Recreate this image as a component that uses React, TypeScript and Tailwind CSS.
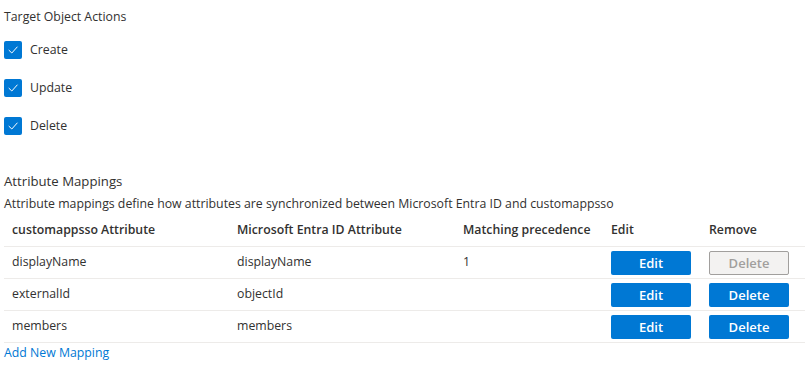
import React from "react";

function Check() {
  return (
    <div className="w-[18px] h-[18px] rounded-[2px] bg-[#0078d4] flex items-center justify-center">
      <svg width="12" height="12" viewBox="0 0 12 12" fill="none">
        <path d="M2 6.3 L4.8 9 L10.2 3" stroke="white" strokeWidth="1" strokeLinecap="round" strokeLinejoin="round" />
      </svg>
    </div>
  );
}

const rows = [
  { a: "displayName", b: "displayName", p: "1", disabled: true },
  { a: "externalId", b: "objectId", p: "", disabled: false },
  { a: "members", b: "members", p: "", disabled: false },
];

export default function App() {
  return (
    <div
      className="w-[809px] h-[366px] bg-white text-[#323130] text-[12.3px] overflow-hidden"
      style={{ fontFamily: '"Open Sans", "Noto Sans", sans-serif' }}
    >
      <div className="pl-1 pt-[8px]">
        <div className="h-[18px] leading-[18px]">Target Object Actions</div>
        <div className="mt-[15px] flex flex-col gap-[20px]">
          {["Create", "Update", "Delete"].map((t) => (
            <div key={t} className="flex items-center gap-2 h-[18px]">
              <Check />
              <span className="leading-[18px]">{t}</span>
            </div>
          ))}
        </div>
        <div className="mt-[36px] text-[13.2px] h-[20px] leading-[20px]">Attribute Mappings</div>
        <div className="mt-[3px] h-[20px] leading-[20px]">
          Attribute mappings define how attributes are synchronized between Microsoft Entra ID and customappsso
        </div>
      </div>
      <div className="ml-1 mt-[1px] w-[801px]">
        <div className="grid grid-cols-[225px_226px_148px_98px_1fr] h-[32px] items-center font-semibold border-b border-[#edebe9]">
          <div className="pl-2">customappsso Attribute</div>
          <div className="pl-2">Microsoft Entra ID Attribute</div>
          <div className="pl-2">Matching precedence</div>
          <div className="pl-2">Edit</div>
          <div className="pl-2">Remove</div>
        </div>
        {rows.map((r) => (
          <div
            key={r.a}
            className="grid grid-cols-[225px_226px_148px_98px_1fr] h-[32px] items-center border-b border-[#edebe9]"
          >
            <div className="pl-2">{r.a}</div>
            <div className="pl-2">{r.b}</div>
            <div className="pl-2">{r.p}</div>
            <div className="pl-2 pt-[1px]">
              <button className="w-[80px] h-[24px] rounded-[2px] bg-[#0078d4] text-white text-[13px] font-semibold leading-none">
                Edit
              </button>
            </div>
            <div className="pl-2 pt-[1px]">
              {r.disabled ? (
                <button className="w-[80px] h-[24px] rounded-[2px] bg-[#f3f2f1] border border-[#a19f9d] text-[#a19f9d] text-[13px] font-semibold leading-none">
                  Delete
                </button>
              ) : (
                <button className="w-[80px] h-[24px] rounded-[2px] bg-[#0078d4] text-white text-[13px] font-semibold leading-none">
                  Delete
                </button>
              )}
            </div>
          </div>
        ))}
      </div>
      <div className="pl-1 text-[#0078d4] h-[20px] leading-[20px]">Add New Mapping</div>
    </div>
  );
}
